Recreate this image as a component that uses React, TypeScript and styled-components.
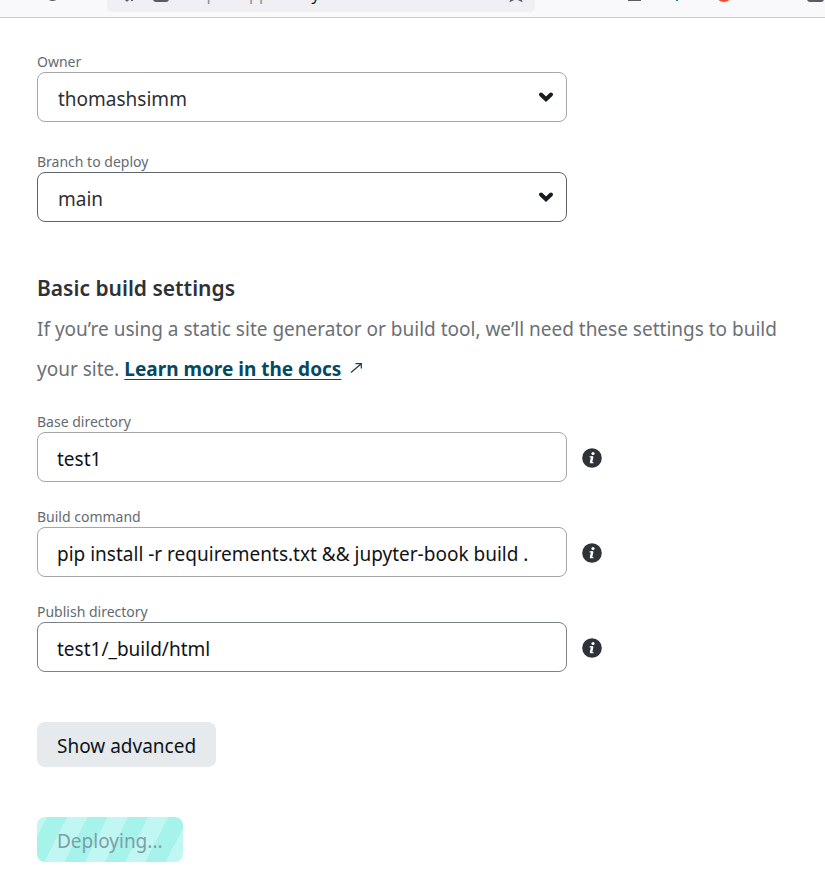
import React from "react";
import styled, { createGlobalStyle } from "styled-components";

const GlobalStyle = createGlobalStyle`
  *, *::before, *::after { box-sizing: border-box; }
  body {
    margin: 0;
    background: #fff;
    color: #0e1e25;
    font-family: "Noto Sans", "Open Sans", sans-serif;
    font-size: 19px;
  }
  button, input, select { font: inherit; }
`;

const BrowserBar = styled.header`
  display: flex;
  align-items: flex-end;
  height: 18px;
  overflow: hidden;
  background: #f9f9fb;
  border-bottom: 1px solid #cccccc;
`;

const BarRow = styled.div`
  display: flex;
  flex: 1;
  align-items: center;
  height: 46px;
`;

const NavArea = styled.div`
  flex: none;
  width: 107px;
  padding-left: 43px;
`;

const AddressBar = styled.div`
  display: flex;
  align-items: center;
  flex: 1 1 428px;
  gap: 14px;
  min-width: 0;
  height: 36px;
  padding: 0 10px 0 14px;
  background: #f0f0f4;
  border-radius: 5px;
`;

const Address = styled.span`
  flex: 1;
  overflow: hidden;
  white-space: nowrap;
  color: #8b8b93;
  font-size: 16px;
  line-height: 24px;
`;

const Domain = styled.span`
  color: #15141a;
`;

const Extensions = styled.div`
  display: flex;
  flex: 0 1 290px;
  justify-content: space-between;
  padding-left: 90px;
`;

const BarIcon = styled.svg`
  flex: none;
  display: block;
  width: 18px;
  height: 20px;
  fill: none;
  stroke: #5b5b66;
  stroke-width: 2;
`;

const Content = styled.main`
  padding: 34px 37px 24px;
`;

const Fields = styled.div<{ $gap: number }>`
  display: flex;
  flex-direction: column;
  gap: ${({ $gap }) => $gap}px;
`;

const Field = styled.div`
  display: flex;
  flex-direction: column;
`;

const Label = styled.label`
  color: #646b70;
  font-size: 14px;
  line-height: 20px;
`;

const ControlRow = styled.div`
  display: flex;
  align-items: center;
  gap: 15px;
`;

const SelectBox = styled.div`
  position: relative;
  flex: 0 1 530px;
`;

const Select = styled.select<{ $strong?: boolean }>`
  display: block;
  width: 100%;
  height: 50px;
  padding: 4px 44px 0 20px;
  appearance: none;
  background: #fff;
  border: 1px solid ${({ $strong }) => ($strong ? "#5f666b" : "#a3a6aa")};
  border-radius: 8px;
  color: #2d2f33;
`;

const Chevron = styled.svg`
  position: absolute;
  right: 13px;
  top: 19px;
  width: 16px;
  height: 12px;
  fill: none;
  stroke: #161d22;
  stroke-width: 4;
  stroke-linecap: round;
  pointer-events: none;
`;

const TextInput = styled.input<{ $strong?: boolean }>`
  flex: 0 1 530px;
  min-width: 0;
  height: 50px;
  padding: 4px 19px 0;
  background: #fff;
  border: 1px solid ${({ $strong }) => ($strong ? "#7c8186" : "#a3a6aa")};
  border-radius: 8px;
  color: #101316;
`;

const InfoButton = styled.button`
  flex: none;
  padding: 2px 0 0;
  border: 0;
  background: none;

  svg { display: block; }
`;

const Heading = styled.h2`
  margin: 45px 0 0;
  color: #2d3236;
  font-size: 21px;
  font-weight: 600;
  line-height: 42px;
`;

const Intro = styled.p`
  margin: 0 0 23px;
  color: #6b7075;
  line-height: 40px;
`;

const DocsLink = styled.a`
  color: #054861;
  font-weight: 700;
  text-decoration: underline;
  text-decoration-thickness: 1px;
  text-underline-offset: 3px;
`;

const OutArrow = styled.svg`
  width: 12px;
  height: 14px;
  margin-left: 9px;
  fill: none;
  stroke: #1b3a47;
  stroke-width: 1.2;
`;

const Actions = styled.div`
  display: flex;
  flex-direction: column;
  align-items: flex-start;
  gap: 50px;
  margin-top: 50px;
`;

const Button = styled.button`
  height: 45px;
  padding: 2px 20px 0;
  border: 0;
  border-radius: 8px;
  background: #e6eaed;
  color: #0e1418;
`;

const DeployButton = styled(Button)`
  background: repeating-linear-gradient(
    117deg,
    #c0f7f2 0 9px,
    #a6f3ec 9px 27px,
    #c0f7f2 27px 36px
  );
  color: #7b9fa9;
`;

type FieldProps = { id: string; label: string; value: string; strong?: boolean };

function SelectField({ id, label, value, strong }: FieldProps) {
  return (
    <Field>
      <Label htmlFor={id}>{label}</Label>
      <ControlRow>
        <SelectBox>
          <Select id={id} defaultValue={value} $strong={strong}>
            <option>{value}</option>
          </Select>
          <Chevron viewBox="0 0 16 12" aria-hidden="true">
            <path d="M3 3.5L8 8.3L13 3.5" />
          </Chevron>
        </SelectBox>
      </ControlRow>
    </Field>
  );
}

function InputField({ id, label, value, strong }: FieldProps) {
  return (
    <Field>
      <Label htmlFor={id}>{label}</Label>
      <ControlRow>
        <TextInput id={id} type="text" defaultValue={value} $strong={strong} />
        <InfoButton type="button" aria-label={`About ${label.toLowerCase()}`}>
          <svg width="20" height="20" viewBox="0 0 20 20" aria-hidden="true">
            <circle cx="10" cy="10" r="9.8" fill="#2d3338" />
            <circle cx="11" cy="5.5" r="1.6" fill="#fff" />
            <path d="M7.6 8.9h2.7L8.9 14.6h2.5" fill="none" stroke="#fff" strokeWidth="1.3" />
            <path d="M10.3 8.4L8.9 14.8" fill="none" stroke="#fff" strokeWidth="2.4" />
          </svg>
        </InfoButton>
      </ControlRow>
    </Field>
  );
}

export default function App() {
  return (
    <>
      <GlobalStyle />
      <BrowserBar>
        <BarRow>
          <NavArea>
            <BarIcon viewBox="0 0 18 20" aria-hidden="true">
              <path d="M14 6a6 6 0 1 0 0 8M15 2v5h-5" />
            </BarIcon>
          </NavArea>
          <AddressBar>
            <BarIcon viewBox="0 0 18 20" aria-hidden="true">
              <path d="M6 2l5 2v13M6 2L1 4c0 6 2 10 5 12.500C9 14 11 10 11 4" />
            </BarIcon>
            <BarIcon viewBox="0 0 18 20" aria-hidden="true">
              <path d="M4 8V5a4 4 0 0 1 8 0v3" />
              <rect x="1" y="8" width="14" height="9" rx="2" fill="#a2a2aa" />
            </BarIcon>
            <Address>
              https://app.<Domain>netlify.com</Domain>/start/
            </Address>
            <BarIcon viewBox="0 0 18 20" aria-hidden="true">
              <path d="M9 1l2.3 5 5.2.6-4 3.700 1.500 6.200L9 14l-5 2.500 1.500-6.200-4-3.700L6.700 6z" />
            </BarIcon>
          </AddressBar>
          <Extensions>
            <BarIcon viewBox="0 0 18 20" aria-hidden="true">
              <path d="M3 16h13M9 2v9M5 7l4 4 4-4" />
            </BarIcon>
            <BarIcon viewBox="0 0 18 20" aria-hidden="true">
              <path d="M6 3v14M10 3v13" stroke="#12808c" />
            </BarIcon>
            <BarIcon viewBox="0 0 18 20" aria-hidden="true">
              <circle cx="8" cy="9" r="8" stroke="#f0502f" />
            </BarIcon>
            <BarIcon viewBox="0 0 18 20" aria-hidden="true">
              <path d="M8 3v13" stroke="#cfe2f3" />
            </BarIcon>
            <BarIcon viewBox="0 0 18 20" aria-hidden="true">
              <rect x="1" y="3" width="15" height="14" rx="2" fill="#a2a2aa" />
            </BarIcon>
          </Extensions>
        </BarRow>
      </BrowserBar>
      <Content>
        <Fields $gap={30}>
          <SelectField id="owner" label="Owner" value="thomashsimm" />
          <SelectField id="branch" label="Branch to deploy" value="main" strong />
        </Fields>
        <Heading>Basic build settings</Heading>
        <Intro>
          If you’re using a static site generator or build tool, we’ll need these settings to build your site.{" "}
          <DocsLink href="#docs">Learn more in the docs</DocsLink>
          <OutArrow viewBox="0 0 12 14" aria-hidden="true">
            <path d="M1 10.500L11 2M5.500 1.700H11.300V6.500" />
          </OutArrow>
        </Intro>
        <Fields $gap={25}>
          <InputField id="base" label="Base directory" value="test1" />
          <InputField id="command" label="Build command" value="pip install -r requirements.txt && jupyter-book build ." />
          <InputField id="publish" label="Publish directory" value="test1/_build/html" strong />
        </Fields>
        <Actions>
          <Button type="button">Show advanced</Button>
          <DeployButton type="button" disabled>
            Deploying...
          </DeployButton>
        </Actions>
      </Content>
    </>
  );
}
